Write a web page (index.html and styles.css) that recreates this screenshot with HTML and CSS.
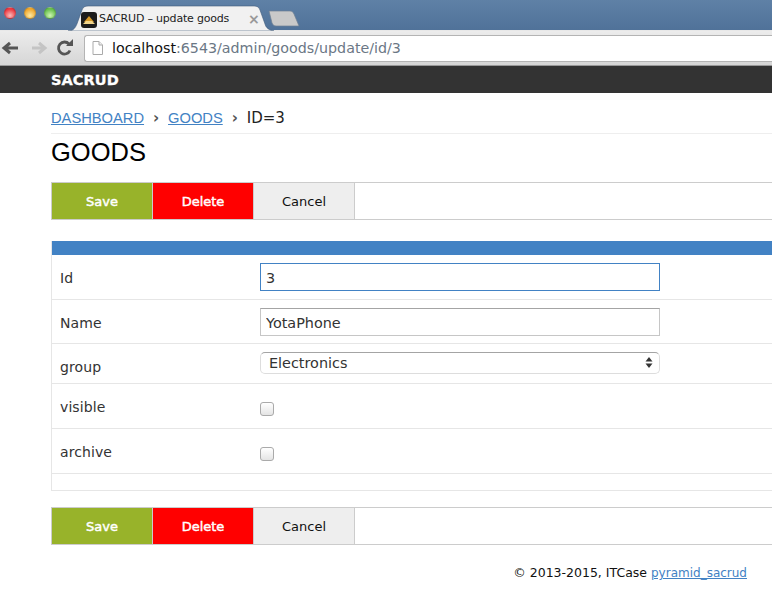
FILE: index.html
```html
<!DOCTYPE html>
<html lang="en">
<head>
<meta charset="utf-8">
<title>SACRUD – update goods</title>
<link rel="stylesheet" href="styles.css">
</head>
<body>
<header class="browser">
  <div class="tabstrip">
    <div class="lights">
      <span class="light red"></span>
      <span class="light yellow"></span>
      <span class="light green"></span>
    </div>
    <div class="tab">
      <svg class="tab-shape" width="206" height="26" viewBox="0 0 206 26"><path d="M0 26C6 26 8 22 10 16L14 5C15 2 17 1 20 1H186C189 1 191 2 192 5L197 19C198 23 201 25 206 26Z" fill="#f1f1f1" stroke="#3f5a7a" stroke-width="0.6"/></svg>
      <svg class="favicon" width="16" height="16" viewBox="0 0 16 16"><rect width="16" height="16" rx="3" fill="#1c1c1c"/><path d="M8 4L13 10H3Z" fill="#d89a28"/><path d="M2 12L5 9H11L14 12Z" fill="#f3d68a"/></svg>
      <span class="tab-title">SACRUD – update goods</span>
      <span class="tab-close">×</span>
    </div>
    <svg class="newtab" width="32" height="17" viewBox="0 0 32 17"><path d="M1 1H22C24 1 25 2 26 4L31 16H8C6 16 5 15 4 13Z" fill="#c9c9c9" stroke="#6f7f92" stroke-width="0.7"/></svg>
  </div>
  <div class="toolbar-row">
    <svg class="nav-icon" width="20" height="16" viewBox="0 0 20 16"><path d="M18 8H6M10 3L4 8L10 13" fill="none" stroke="#555" stroke-width="3"/></svg>
    <svg class="nav-icon" width="20" height="16" viewBox="0 0 20 16"><path d="M3 8H15M10 3L16 8L10 13" fill="none" stroke="#c4c4c4" stroke-width="3"/></svg>
    <svg class="nav-icon reload" width="18" height="18" viewBox="0 0 18 18"><path d="M14 11.500A6 6 0 1 1 13 5" fill="none" stroke="#555" stroke-width="2.800"/><path d="M10 7H17V0Z" fill="#555"/></svg>
    <div class="omnibox">
      <svg width="11" height="14" viewBox="0 0 11 14"><path d="M1 .5H7L10.500 4V13.500H1Z" fill="#fff" stroke="#aaa"/><path d="M7 .5V4H10.500" fill="#eee" stroke="#aaa"/></svg>
      <span class="url"><span class="host">localhost</span>:6543/admin/goods/update/id/3</span>
    </div>
  </div>
</header>

<div class="navbar"><span class="brand">SACRUD</span></div>

<main class="content">
  <nav class="crumbs">
    <a href="#">DASHBOARD</a><span class="sep">›</span><a href="#">GOODS</a><span class="sep">›</span><span class="current">ID=3</span>
  </nav>
  <h1 class="title">GOODS</h1>

  <div class="actions">
    <button class="btn save">Save</button>
    <button class="btn delete">Delete</button>
    <button class="btn cancel">Cancel</button>
  </div>

  <form class="form">
    <div class="form-head"></div>
    <div class="row r-id">
      <label class="lbl lbl-text">Id</label>
      <input class="field focus" type="text" value="3">
    </div>
    <div class="row r-name">
      <label class="lbl lbl-text">Name</label>
      <input class="field" type="text" value="YotaPhone">
    </div>
    <div class="row r-group">
      <label class="lbl lbl-low">group</label>
      <div class="select">
        <span>Electronics</span>
        <svg width="8" height="13" viewBox="0 0 8 13"><path d="M4 1L7.500 5.500H.5Z" fill="#333"/><path d="M4 12L.5 7.500H7.500Z" fill="#333"/></svg>
      </div>
    </div>
    <div class="row r-check">
      <label class="lbl lbl-up">visible</label>
      <span class="check"></span>
    </div>
    <div class="row r-check">
      <label class="lbl lbl-up">archive</label>
      <span class="check"></span>
    </div>
    <div class="row-empty"></div>
  </form>

  <div class="actions actions-bottom">
    <button class="btn save">Save</button>
    <button class="btn delete">Delete</button>
    <button class="btn cancel">Cancel</button>
  </div>

  <footer class="foot">© 2013-2015, ITCase <a href="#">pyramid_sacrud</a></footer>
</main>
</body>
</html>
```

FILE: styles.css
```css
* { box-sizing: border-box; }
html, body { margin: 0; padding: 0; height: 603px; overflow: hidden; background: #fff; }
body { font-family: "DejaVu Sans", Verdana, sans-serif; color: #222; width: 772px; }
a { color: #4282c4; text-decoration: underline; }

.browser { height: 66px; display: flex; flex-direction: column; }
.tabstrip {
  height: 30px; display: flex; align-items: flex-start;
  background: linear-gradient(#5f81a6, #507299);
}
.lights { display: flex; gap: 8px; padding: 7px 0 0 4px; width: 66px; }
.light { width: 12px; height: 12px; border-radius: 50%; border: 1px solid rgba(0,0,0,.15); }
.light.red { background: radial-gradient(circle at 50% 75%, #fcbcbc, #ee3a42 70%); }
.light.yellow { background: radial-gradient(circle at 50% 75%, #fdeaa4, #f0a82e 70%); }
.light.green { background: radial-gradient(circle at 50% 75%, #cef6b2, #68c04e 70%); }
.tab {
  position: relative; width: 206px; height: 30px; margin-left: 2px; padding: 11px 0 0 13px;
  display: flex; align-items: center; gap: 2px; flex: none;
}
.tab-shape { position: absolute; left: 0; top: 5px; }
.favicon { position: relative; flex: none; margin-top: -1px; }
.tab-title {
  position: relative; font: 11px "DejaVu Sans", sans-serif; color: #222; width: 147px;
  white-space: nowrap; letter-spacing: -.2px; margin-top: -4px;
}
.tab-close { position: relative; color: #999; font-size: 14px; font-weight: bold; margin-top: -3px; }
.newtab { margin: 10px 0 0 -6px; flex: none; }

.toolbar-row {
  height: 36px; display: flex; align-items: center;
  background: linear-gradient(#ececec, #d6d6d6); border-top: 1px solid #e8e8e8;
  border-bottom: 1px solid #999;
}
.nav-icon { flex: none; }
.nav-icon + .nav-icon { margin-left: 9px; }
.nav-icon.reload { margin-left: 7px; }
.omnibox {
  flex: 1; height: 27px; margin-left: 10px; background: #fff;
  border: 1px solid #b4b4b4; border-right: 0; border-radius: 3px 0 0 3px;
  display: flex; align-items: center; gap: 9px; padding-left: 7px;
  font-size: 14.250px; color: #6b7785;
}
.host { color: #111; }

.navbar { height: 27px; background: #333; display: flex; align-items: center; padding-left: 51px; }
.brand { color: #fff; font: bold 14.500px "DejaVu Sans", sans-serif; letter-spacing: .1px; -webkit-text-stroke: .3px #fff; }

.content { padding-left: 51px; }
.crumbs {
  height: 41px; padding-top: 17px; border-bottom: 1px solid #eee; font-size: 15px;
  display: flex; align-items: baseline; white-space: nowrap; line-height: 17px;
}
.crumbs a { font-family: "Liberation Sans", Arial, sans-serif; font-size: 14.700px; }
.sep { color: #555; font-weight: bold; width: 24px; text-align: center; font-size: 15px; }
.current { color: #222; }
.title {
  margin: 0; height: 48px; padding-top: 3px; font: 400 25.500px/30px "Liberation Sans", Arial, sans-serif; color: #000;
}
.actions {
  height: 38px; display: flex; border: 1px solid #ccc; border-width: 1px 0 1px 1px;
}
.btn {
  width: 101px; height: 36px; padding: 0; border: 0; border-right: 1px solid #ccc;
  font: 13px "DejaVu Sans", sans-serif; flex: none;
}
.btn.save { background: #98b32a; color: #fff; -webkit-text-stroke: .45px #fff; }
.btn.delete { background: #f00; color: #fff; -webkit-text-stroke: .45px #fff; }
.btn.cancel { background: #eee; color: #111; }

.form { margin-top: 21px; border: 1px solid #e6e6e6; border-width: 0 0 1px 1px; height: 250px; font-size: 14px; }
.form-head { height: 14px; background: #4282c4; }
.row { display: flex; align-items: center; border-bottom: 1px solid #e6e6e6; padding-left: 8px; color: #333; }
.r-id { height: 45px; }
.r-name { height: 44px; }
.r-group { height: 40px; }
.r-check { height: 45px; }
.lbl { width: 200px; flex: none; letter-spacing: .1px; }
.lbl-text { padding-top: 2px; }
.lbl-low { padding-top: 7px; }
.lbl-up { padding-top: 2px; }
.field {
  width: 400px; height: 28px; padding: 2px 5px 0; border: 1px solid #c6c6c6; border-top-color: #a4a4a4;
  font: 14.400px "DejaVu Sans", sans-serif; color: #333; background: #fff; outline: 0;
}
.field.focus { border: 1px solid #4282c4; }
.select {
  width: 400px; height: 22px; border: 1px solid #ddd; border-top-color: #a4a4a4; border-radius: 5px;
  display: flex; align-items: center; justify-content: space-between;
  padding: 0 6px 0 8px; color: #333; font-size: 14.400px; margin-top: -2px;
}
.check {
  width: 14px; height: 14px; border: 1px solid #aaa; border-radius: 3px; margin-top: 6px;
  background: linear-gradient(#fff, #e4e4e4);
}
.row-empty { height: 17px; }

.actions-bottom { margin-top: 16px; }
.foot {
  margin-top: 20px; padding-right: 25px; text-align: right; font-size: 12.500px; color: #111; line-height: 16px;
}
.foot a { font-size: 12px; }
```
